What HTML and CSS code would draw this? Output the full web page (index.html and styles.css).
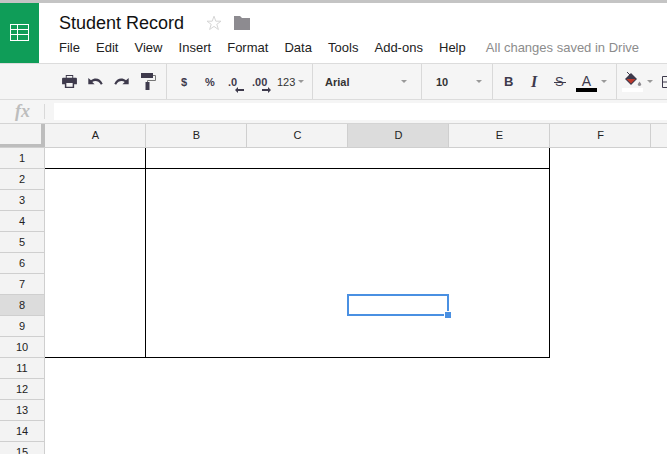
FILE: index.html
```html
<!DOCTYPE html>
<html lang="en">
<head>
<meta charset="utf-8">
<title>Student Record</title>
<link rel="stylesheet" href="styles.css">
</head>
<body>
<div class="app">
  <header class="top">
    <div class="logo">
      <svg width="19" height="17" viewBox="0 0 19 17" fill="none" stroke="#fff" stroke-width="1"><rect x=".5" y=".5" width="18" height="16"/><path d="M.5 5.500h18M.5 10.500h18M7.500.5v16"/></svg>
    </div>
    <div class="titles">
      <div class="title-row">
        <span class="doc-title">Student Record</span>
        <svg class="star" width="16" height="16" viewBox="0 0 16 16" fill="none" stroke="#d6d6d6"><path d="M8 1.2l1.800 5h5.200l-4.200 3.100 1.600 5.200L8 11.400l-4.400 3.100 1.600-5.200L1 6.200h5.200z"/></svg>
        <svg class="folder" width="16" height="14" viewBox="0 0 16 14"><path fill="#8d8b90" d="M0 0h6l2 2h8v12H0z"/></svg>
      </div>
      <nav class="menu">
        <span>File</span><span>Edit</span><span>View</span><span>Insert</span><span>Format</span><span>Data</span><span>Tools</span><span>Add-ons</span><span>Help</span>
        <span class="saved">All changes saved in Drive</span>
      </nav>
    </div>
  </header>

  <div class="toolbar">
    <div class="group g-history">
      <svg width="15" height="13" viewBox="0 0 16 14"><path fill="#3e3a4c" d="M4 0h8v3h3a1 1 0 0 1 1 1v6h-3v4H3v-4H0V4a1 1 0 0 1 1-1h3z"/><path fill="#f5f5f5" d="M5 1.200h6V3H5zM4.600 8.500h6.800v4.200H4.600z"/></svg>
      <svg width="15" height="9" viewBox="0 0 16 10"><path fill="#3e3a4c" d="M0 1l0 7h7L4.400 5.600C7 3.600 11.500 3.800 14 8.500L16 7.500C13.500 1.500 7.500 0 3 3.700z"/></svg>
      <svg width="15" height="9" viewBox="0 0 16 10"><path fill="#3e3a4c" d="M16 1v7H9l2.600-2.400C9 3.600 4.500 3.800 2 8.500L0 7.500C2.500 1.500 8.500 0 13 3.700z"/></svg>
      <svg class="roller" width="15" height="17" viewBox="0 0 15 17"><path fill="#3e3a4c" d="M0 0h12v5H0z"/><path fill="none" stroke="#777" d="M12 2.500h2.500v5H6.500v2"/><path fill="#3e3a4c" d="M4.500 9h4v8h-4z"/></svg>
    </div>
    <div class="group g-format">
      <span class="tb-b s-dollar">$</span>
      <span class="tb-b s-pct">%</span>
      <span class="dec s-dec1">.0<svg width="9" height="6" viewBox="0 0 9 6"><path fill="#3e3a4c" d="M0 3l3-3v2h6v2H3v2z"/></svg></span>
      <span class="dec s-dec2">.00<svg width="9" height="6" viewBox="0 0 9 6"><path fill="#3e3a4c" d="M9 3L6 0v2H0v2h6v2z"/></svg></span>
      <span class="num">123</span><i class="caret"></i>
    </div>
    <div class="group g-font"><span class="font-name">Arial</span><i class="caret"></i></div>
    <div class="group g-size"><span class="font-size">10</span><i class="caret"></i></div>
    <div class="group g-style">
      <span class="st st-b">B</span>
      <span class="st st-i">I</span>
      <span class="st st-s">S</span>
      <span class="color-a"><span>A</span><i class="swatch"></i></span><i class="caret"></i>
    </div>
    <div class="group g-fill">
      <span class="fill">
        <svg width="18" height="16" viewBox="0 0 18 16"><path fill="#3e3a4c" d="M1 7l6-6 6 6-6 6z"/><path fill="#c0392b" d="M2.500 7h9l-4.500 4.500z"/><path fill="none" stroke="#3e3a4c" d="M3 0l4 4"/><path fill="#8d8b90" d="M15.500 9.500l1.800 2.700a1.800 1.800 0 1 1-3.600 0z"/></svg>
        <i class="swatch white"></i>
      </span><i class="caret"></i>
      <svg class="borders" width="11" height="12" viewBox="0 0 11 12" fill="none" stroke="#3e3a4c"><path d="M.5.500h14v11H.500zM.5 6h14"/></svg>
    </div>
  </div>

  <div class="formula">
    <span class="fx">fx</span>
    <div class="fx-input"></div>
  </div>

  <div class="col-heads">
    <div class="corner"></div>
    <div class="col">A</div><div class="col">B</div><div class="col">C</div><div class="col active">D</div><div class="col">E</div><div class="col">F</div><div class="col"></div>
  </div>

  <div class="body">
    <div class="row-heads">
      <div class="rh">1</div><div class="rh">2</div><div class="rh">3</div><div class="rh">4</div><div class="rh">5</div>
      <div class="rh">6</div><div class="rh">7</div><div class="rh active">8</div><div class="rh">9</div><div class="rh">10</div>
      <div class="rh">11</div><div class="rh">12</div><div class="rh">13</div><div class="rh">14</div><div class="rh">15</div>
    </div>
    <div class="canvas">
      <div class="table">
        <div class="cell"></div><div class="cell"></div>
        <div class="cell"></div><div class="cell"></div>
      </div>
      <div class="selection"><i class="handle"></i></div>
    </div>
  </div>
</div>
</body>
</html>
```
FILE: styles.css
```css
* { box-sizing: border-box; }
html, body { margin: 0; height: 100%; overflow: hidden; background: #fff; }
body { font-family: "Liberation Sans", Arial, sans-serif; color: #222; }
.app { width: 667px; height: 454px; overflow: hidden; border-top: 3px solid #c4c4c4; }

.top { display: flex; height: 60px; background: #fff; }
.logo { width: 39px; height: 60px; padding-bottom: 1px; background: #0f9d58; display: flex; align-items: center; justify-content: center; }
.titles { padding-left: 20px; flex: 1; }
.title-row { display: flex; align-items: center; height: 30px; padding-top: 10px; }
.doc-title { font-size: 18px; line-height: 22px; width: 147px; color: #111; }
.star { margin-right: 12px; }
.menu { display: flex; font-size: 13px; line-height: 16px; padding-top: 7px; color: #222; }
.menu span { margin-right: 16.1px; white-space: nowrap; }
.menu .saved { color: #8c8c8c; margin: 0 0 0 4px; }

.toolbar { display: flex; height: 37px; background: #f5f5f5; border-top: 1px solid #dcdcdc; border-bottom: 1px solid #dcdcdc; }
.group { display: flex; align-items: center; height: 35px; border-right: 1px solid #d9d9d9; flex: none; font-size: 11px; color: #333; }
.g-history { width: 167px; padding-left: 62px; gap: 11px; }
.roller { margin-left: 1px; }
.g-format { width: 146px; padding-left: 14px; font-size: 11px; }
.tb-b { font-weight: bold; color: #3e3a4c; font-size: 11px; }
.s-dollar { width: 24px; }
.s-pct { width: 23px; }
.dec { position: relative; font-weight: bold; font-size: 11px; color: #3e3a4c; }
.dec svg { position: absolute; top: 11px; }
.s-dec1 { width: 24px; }
.s-dec1 svg { left: 7px; }
.s-dec2 { width: 25px; }
.s-dec2 svg { left: 10px; }
.num { font-size: 11px; margin-right: 3px; }
.caret { display: block; width: 0; height: 0; border: 3px solid transparent; border-top: 3px solid #999; border-bottom: 0; flex: none; }
.g-font { width: 109px; padding-left: 12px; padding-right: 14px; font-weight: bold; justify-content: space-between; }
.font-name { color: #333; font-weight: bold; }
.g-size { width: 71px; padding-left: 14px; padding-right: 10px; justify-content: space-between; font-weight: bold; }
.g-style { width: 124px; padding-left: 11px; }
.st { font-size: 13px; color: #3e3a4c; font-weight: bold; }
.st-b { width: 26px; }
.st-i { width: 25px; font-family: "Liberation Serif", serif; font-style: italic; font-size: 16px; padding-left: 1px; }
.st-s { position: relative; width: 21px; font-weight: normal; }
.st-s::after { content: ""; position: absolute; left: -1px; top: 8px; width: 12px; height: 1px; background: #3e3a4c; }
.color-a { display: flex; flex-direction: column; align-items: center; width: 21px; padding-top: 3px; font-size: 14px; line-height: 14px; margin-right: 4px; color: #3e3a4c; }
.swatch { display: block; width: 21px; height: 4px; background: #000; }
.g-fill { flex: 1; border-right: 0; padding-left: 5px; }
.fill { display: flex; flex-direction: column; width: 21px; margin-right: 4px; padding-left: 2px; }
.swatch.white { background: #fff; margin-left: -2px; }
.borders { margin-left: 9px; flex: none; }

.formula { display: flex; align-items: center; height: 23px; background: #f5f5f5; }
.fx { width: 45px; border-right: 1px solid #d9d9d9; height: 15px; line-height: 15px; font-family: "Liberation Serif", serif; font-style: italic; font-weight: bold; font-size: 18px; color: #bdbdbd; padding-left: 15px; }
.fx-input { flex: 1; height: 17px; margin-left: 9px; background: #fff; }

.col-heads { display: flex; height: 25px; background: #f3f3f3; border-top: 1px solid #d4d4d4; border-bottom: 1px solid #cfcfcf; }
.corner { width: 45px; flex: none; border-right: 4px solid #bdbdbd; border-bottom: 3px solid #bdbdbd; }
.col { width: 101px; flex: none; border-right: 1px solid #cfcfcf; padding-left: 1px; text-align: center; line-height: 23px; font-size: 11px; color: #222; }
.col.active { background: #dcdcdc; }

.body { display: flex; }
.row-heads { width: 45px; flex: none; background: #f3f3f3; border-right: 1px solid #cfcfcf; }
.rh { height: 21px; border-bottom: 1px solid #cfcfcf; text-align: center; line-height: 20px; font-size: 11px; color: #222; }
.rh.active { background: #dcdcdc; }

.canvas { position: relative; flex: 1; }
.table { display: grid; width: 505px; grid-template-columns: 101px 404px; grid-template-rows: 21px 189px; }
.cell { border-bottom: 1px solid #000; border-right: 1px solid #000; }
.selection { position: absolute; left: 302px; top: 146px; width: 102px; height: 22px; border: 2px solid #4a90e2; }
.handle { position: absolute; right: -4px; bottom: -4px; width: 6px; height: 6px; background: #4a90e2; box-shadow: 0 0 0 1px #fff; }
```
